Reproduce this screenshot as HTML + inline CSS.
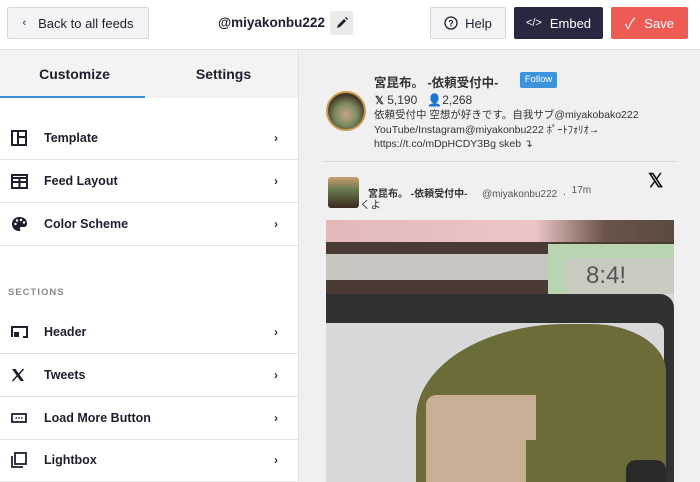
<!DOCTYPE html>
<html><head><meta charset="utf-8"><style>
*{box-sizing:border-box;margin:0;padding:0}
body{width:700px;height:482px;overflow:hidden;font-family:"Liberation Sans","Noto Sans CJK JP",sans-serif;background:#f0f0f0;position:relative;color:#1e1e2e}
.top{position:absolute;left:0;top:0;width:700px;height:50px;background:#fff;border-bottom:1px solid #e2e2e2}
.btn{position:absolute;top:7px;height:32px;border-radius:2px;font-size:13px;font-weight:bold;display:flex;align-items:center;justify-content:center}
.side{position:absolute;left:0;top:50px;width:299px;height:432px;background:#fff;border-right:1px solid #e0e0e0}
.tabs{height:48px;background:#f3f3f4;display:flex;position:relative}
.tabs div{flex:1;text-align:center;line-height:48px;font-size:14px;font-weight:bold;color:#1e1e2e}
.row{position:absolute;left:0;width:299px;height:43px;border-bottom:1px solid #e4e4e4;display:flex;align-items:center;font-size:12.5px;font-weight:bold}
.row svg{position:absolute;left:11px}
.row span{position:absolute;left:44px}
.row i{position:absolute;left:274px;font-style:normal;font-size:12px;color:#333}
.pv{position:absolute;left:300px;top:50px;width:400px;height:432px}
.im div{position:absolute}
</style></head><body>
<div class="top">
 <div class="btn" style="left:7px;width:142px;background:#f3f4f5;border:1px solid #d8d8d8;color:#1e1e2e;font-weight:normal"><span style="font-size:11px;margin-right:12px">‹</span>Back to all feeds</div>
 <div style="position:absolute;left:218px;top:15px;font-size:13.5px;font-weight:bold">@miyakonbu222</div>
 <div style="position:absolute;left:330px;top:11px;width:23px;height:24px;background:#eaeaea;border-radius:2px"><svg width="23" height="24" viewBox="0 0 23 24"><path d="M7 17l1-3 6-6 2 2-6 6z M15 7l1-1 2 2-1 1z" fill="#1e1e2e"/></svg></div>
 <div class="btn" style="left:430px;width:76px;background:#f3f4f5;border:1px solid #d8d8d8;font-weight:normal"><svg width="14" height="14" style="margin-right:7px"><circle cx="7" cy="7" r="6" fill="none" stroke="#1e1e2e" stroke-width="1.3"/><text x="7" y="10.5" font-size="9" text-anchor="middle" font-family="Liberation Sans" font-weight="bold" fill="#1e1e2e">?</text></svg>Help</div>
 <div class="btn" style="left:514px;width:89px;background:#262940;color:#fff;font-weight:normal"><span style="font-size:11px;margin-right:8px">&lt;/&gt;</span>Embed</div>
 <div class="btn" style="left:611px;width:77px;background:#ee5b55;color:#fff;font-weight:normal"><span style="margin-right:9px;font-size:15px">✓</span>Save</div>
</div>
<div class="side">
 <div class="tabs"><div>Customize</div><div>Settings</div><b style="position:absolute;left:0;top:46px;width:145px;height:2px;background:#3d8fd1"></b></div>
 <div class="row" style="top:67px"><svg width="16" height="16"><rect x="1" y="1" width="14" height="14" fill="none" stroke="#1e1e2e" stroke-width="2"/><path d="M7 1v14M7 7h8" stroke="#1e1e2e" stroke-width="2"/></svg><span>Template</span><i>›</i></div>
 <div class="row" style="top:110px"><svg width="17" height="15"><rect x="1" y="1" width="15" height="13" fill="none" stroke="#1e1e2e" stroke-width="2"/><path d="M1 4h15M1 8h15M8.5 4v10" stroke="#1e1e2e" stroke-width="2"/></svg><span>Feed Layout</span><i>›</i></div>
 <div class="row" style="top:153px"><svg width="17" height="16"><path d="M8.5 1C4 1 1 4 1 8s3 7 7 7c1.5 0 1.5-1 1-2s0-2 1.5-2H13c2 0 3-1.5 3-3.5C16 3.5 13 1 8.5 1z" fill="#1e1e2e"/><circle cx="4.5" cy="8" r="1.2" fill="#fff"/><circle cx="6" cy="4.5" r="1.2" fill="#fff"/><circle cx="10" cy="4" r="1.2" fill="#fff"/><circle cx="13" cy="6.5" r="1.2" fill="#fff"/></svg><span>Color Scheme</span><i>›</i></div>
 <div style="position:absolute;left:8px;top:237px;font-size:9.5px;font-weight:bold;color:#8a8a8a;letter-spacing:1px">SECTIONS</div>
 <div class="row" style="top:261px;border-top:0"><svg width="17" height="14"><path d="M1 12V2h15v10h-4" fill="none" stroke="#1e1e2e" stroke-width="2"/><rect x="3" y="7" width="5" height="5" fill="#1e1e2e"/></svg><span>Header</span><i>›</i></div>
 <div class="row" style="top:304px"><svg width="14" height="14"><path d="M1 1h3.5l8.5 12H9.5z" fill="#1e1e2e"/><path d="M12.5 1L1.5 13" stroke="#1e1e2e" stroke-width="1.5"/></svg><span>Tweets</span><i>›</i></div>
 <div class="row" style="top:347px"><svg width="16" height="12"><rect x="1" y="2" width="14" height="8" fill="none" stroke="#1e1e2e" stroke-width="1.8"/><path d="M4.5 6h1.5M7.3 6h1.5M10 6h1.5" stroke="#1e1e2e" stroke-width="1.6"/></svg><span>Load More Button</span><i>›</i></div>
 <div class="row" style="top:389px"><svg width="16" height="16"><rect x="4" y="1" width="11" height="11" fill="none" stroke="#1e1e2e" stroke-width="1.8"/><path d="M1 4v11h11" fill="none" stroke="#1e1e2e" stroke-width="1.8"/></svg><span>Lightbox</span><i>›</i></div>
</div>
<div class="pv">
 <div style="position:absolute;left:26px;top:41px;width:40px;height:40px;border-radius:50%;background:radial-gradient(circle at 50% 60%,#c9a58a 0,#7a8a60 40%,#3a2a1e 75%);border:2px solid #c89a50"></div>
 <div style="position:absolute;left:74px;top:22px;font-size:12.5px;font-weight:bold;color:#333">宮昆布。 -依頼受付中-</div>
 <div style="position:absolute;left:220px;top:22px;width:37px;height:16px;background:#3d94dd;border-radius:2px;color:#fff;font-size:9.5px;text-align:center;line-height:16px">Follow</div>
 <div style="position:absolute;left:75px;top:43px;font-size:12px;color:#333"><b style="font-size:11px">𝕏</b> 5,190 &nbsp;&nbsp;<b>👤</b>2,268</div>
 <div style="position:absolute;left:74px;top:58px;font-size:10.5px;line-height:14.5px;color:#333;width:320px">依頼受付中 空想が好きです。自我サブ@miyakobako222<br>YouTube/Instagram@miyakonbu222 ﾎﾟｰﾄﾌｫﾘｵ→<br>https://t.co/mDpHCDY3Bg skeb ↴</div>
 <div style="position:absolute;left:22px;top:111px;width:356px;height:1px;background:#dcdcdc"></div>
 <div style="position:absolute;left:28px;top:127px;width:31px;height:31px;border-radius:3px;background:linear-gradient(#c9a070,#6a7a50 40%,#3a2a1e)"></div>
 <div style="position:absolute;left:68px;top:135px;font-size:10px;font-weight:bold;color:#333">宮昆布。 -依頼受付中-</div>
 <div style="position:absolute;left:182px;top:139px;font-size:10px;color:#555">@miyakonbu222 &nbsp;· &nbsp;<span style="position:relative;top:-4px">17m</span></div>
 <div style="position:absolute;left:348px;top:120px;font-size:19px;font-weight:bold;color:#111">𝕏</div>
 <div style="position:absolute;left:60px;top:147px;font-size:10.5px;color:#333">くよ</div>
 <div class="im" style="position:absolute;left:26px;top:170px;width:348px;height:262px;overflow:hidden;background:#d8d8da">
  <div style="left:0;top:0;width:348px;height:22px;background:linear-gradient(90deg,#e2b8b8,#ecc6c6 60%,#6a5448 80%,#5a4a40)"></div>
  <div style="left:0;top:22px;width:348px;height:12px;background:#4a3a34"></div>
  <div style="left:0;top:34px;width:348px;height:26px;background:#c8c4c0"></div>
  <div style="left:0;top:60px;width:348px;height:14px;background:#4a3a34"></div>
  <div style="left:222px;top:24px;width:126px;height:50px;background:#b8d4b0"></div>
  <div style="left:240px;top:38px;width:108px;height:36px;background:#c8ccc0;font-size:24px;color:#555;padding-left:20px;line-height:36px">8:4!</div>
  <div style="left:0;top:74px;width:348px;height:188px;background:#303232;border-radius:0 14px 0 0"></div>
  <div style="left:0;top:103px;width:338px;height:159px;background:#d8d8da;border-radius:0 8px 0 0"></div>
  <div style="left:90px;top:104px;width:250px;height:158px;background:#6c6c38;border-radius:60% 30% 0 0"></div>
  <div style="left:100px;top:175px;width:110px;height:87px;background:#c8ae92;border-radius:10px 0 0 0"></div>
  <div style="left:200px;top:220px;width:60px;height:42px;background:#6c6c38"></div>
  <div style="left:300px;top:240px;width:40px;height:22px;background:#2a2a2a;border-radius:10px 10px 0 0"></div>
 </div>
</div>
</body></html>
